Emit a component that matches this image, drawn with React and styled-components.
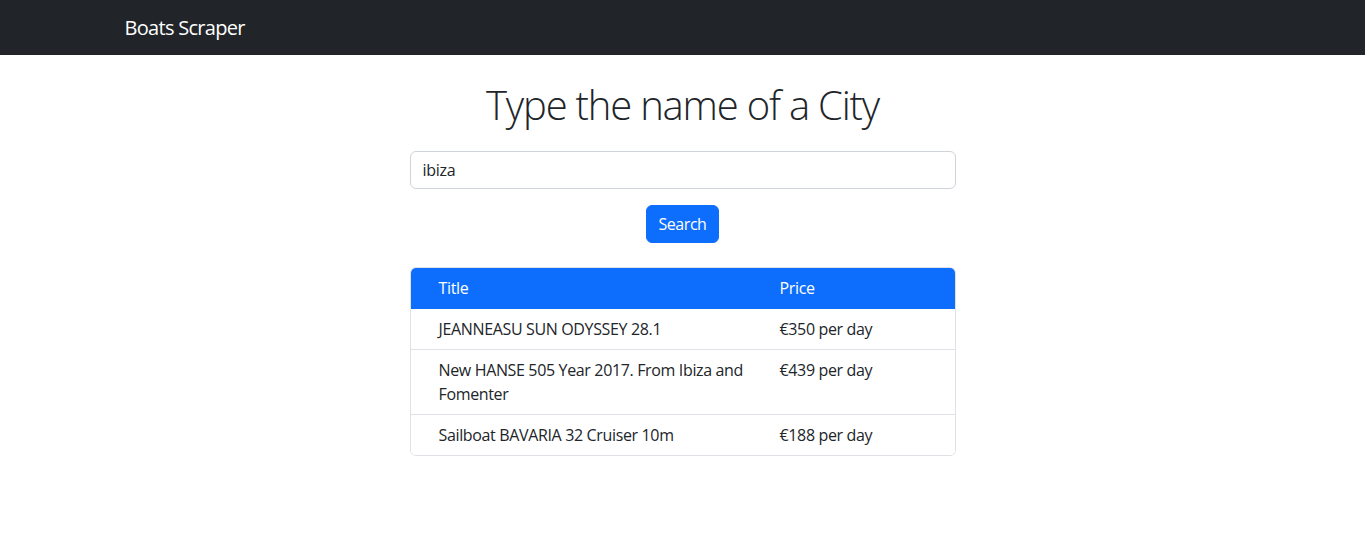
import React from "react";
import styled, { createGlobalStyle } from "styled-components";

const Global = createGlobalStyle`
  html, body { margin: 0; padding: 0; background: #fff; }
  body {
    font-family: "Open Sans", "Noto Sans", "Liberation Sans", sans-serif;
    font-size: 16px;
    line-height: 24px;
    color: #212529;
  }
  * { box-sizing: border-box; }
`;

const Navbar = styled.nav`
  height: 55px;
  background: #212529;
  display: flex;
  align-items: center;
`;

const NavContainer = styled.div`
  width: 1140px;
  margin: 0 auto;
  padding: 0 12px;
`;

const Brand = styled.span`
  color: #fff;
  font-size: 20px;
  line-height: 30px;
  letter-spacing: -0.7px;
`;

const Main = styled.main`
  width: 546px;
  margin: 0 auto;
  display: flex;
  flex-direction: column;
  align-items: center;
`;

const Heading = styled.h1`
  margin: 26px 0 22px;
  font-size: 40px;
  line-height: 48px;
  font-weight: 300;
  letter-spacing: -1.2px;
  color: #212529;
`;

const Input = styled.input`
  width: 100%;
  height: 38px;
  padding: 6px 12px;
  border: 1px solid #ced4da;
  border-radius: 6px;
  font: inherit;
  letter-spacing: -0.3px;
  color: #212529;
  outline: none;
`;

const Button = styled.button`
  margin-top: 16px;
  height: 38px;
  padding: 6px 12px;
  border: 1px solid #0d6efd;
  background: #0d6efd;
  color: #fff;
  border-radius: 6px;
  font: inherit;
  letter-spacing: -0.45px;
`;

const Table = styled.div`
  margin-top: 24px;
  width: 100%;
  border: 1px solid #dee2e6;
  border-radius: 6px;
  overflow: hidden;
`;

const Row = styled.div`
  display: grid;
  grid-template-columns: 341px 1fr;
  background: ${(p) => (p.$head ? "#0d6efd" : "#fff")};
  color: ${(p) => (p.$head ? "#fff" : "#212529")};
  border-bottom: ${(p) => (p.$last || p.$head ? "none" : "1px solid #dee2e6")};
  min-height: ${(p) => (p.$head ? "41px" : "40px")};
`;

const Cell = styled.div`
  padding: ${(p) => (p.$head ? "8px 4px 9px 28px" : "8px 4px 8px 28px")};
  letter-spacing: -0.35px;
`;

const rows = [
  ["JEANNEASU SUN ODYSSEY 28.1", "€350 per day"],
  ["New HANSE 505 Year 2017. From Ibiza and Fomenter", "€439 per day"],
  ["Sailboat BAVARIA 32 Cruiser 10m", "€188 per day"],
];

export default function App() {
  return (
    <>
      <Global />
      <Navbar>
        <NavContainer>
          <Brand>Boats Scraper</Brand>
        </NavContainer>
      </Navbar>
      <Main>
        <Heading>Type the name of a City</Heading>
        <Input defaultValue="ibiza" />
        <Button>Search</Button>
        <Table>
          <Row $head>
            <Cell $head>Title</Cell>
            <Cell $head>Price</Cell>
          </Row>
          {rows.map((r, i) => (
            <Row key={i} $last={i === rows.length - 1}>
              <Cell>{r[0]}</Cell>
              <Cell>{r[1]}</Cell>
            </Row>
          ))}
        </Table>
      </Main>
    </>
  );
}
